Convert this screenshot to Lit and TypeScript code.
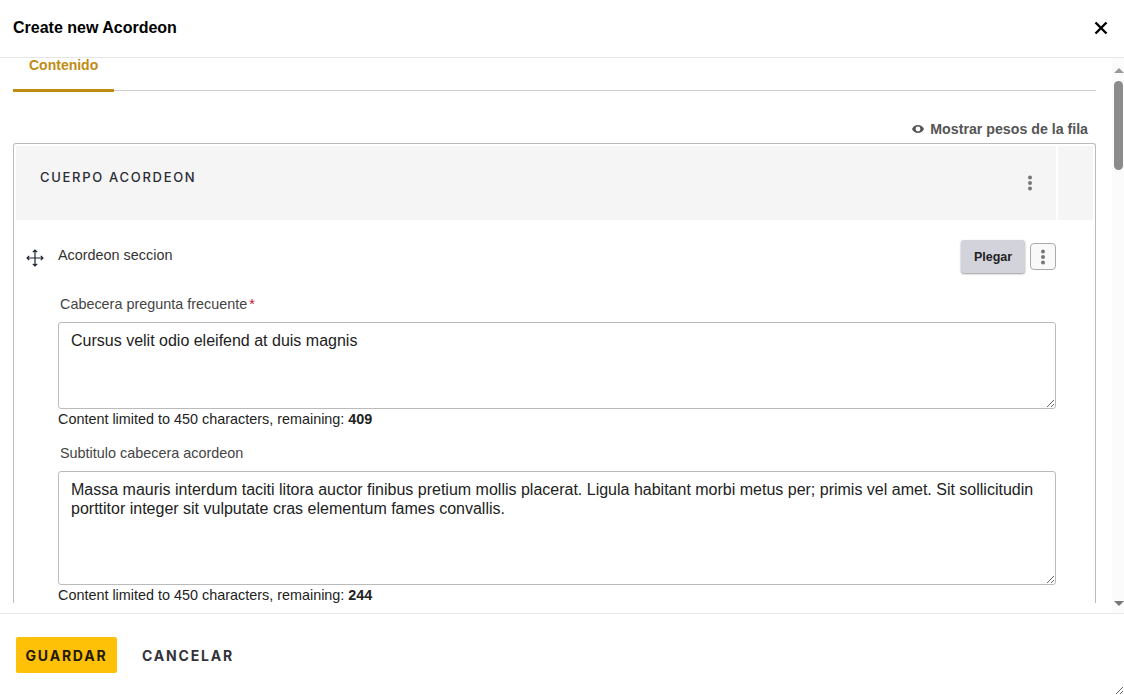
import { LitElement, html, css, svg } from "lit";
import { customElement } from "lit/decorators.js";

const dots = html`<svg class="dots" width="6" height="16" viewBox="0 0 6 16"><circle cx="3" cy="2.5" r="2"/><circle cx="3" cy="8" r="2"/><circle cx="3" cy="13.5" r="2"/></svg>`;

@customElement("app-root")
export class AppRoot extends LitElement {
  static styles = css`
    :host { display: block; font-family: "Liberation Sans", Arial, sans-serif; color: #222; }
    * { box-sizing: border-box; }
    .dialog { width: 1124px; height: 695px; display: flex; flex-direction: column; background: #fff; overflow: hidden; resize: both; }
    .head { height: 58px; flex: none; display: flex; align-items: center; justify-content: space-between; padding: 0 16px 2px 13px; border-bottom: 1px solid #e6e6e6; }
    .title { font-size: 16px; font-weight: 700; color: #000; }
    .close { display: block; }
    .middle { flex: 1; min-height: 0; display: flex; }
    .content { flex: 1; min-width: 0; overflow: hidden; padding: 0 16px 0 13px; }
    .tabs { height: 33px; border-bottom: 1px solid #ccc; display: flex; }
    .tab { width: 101px; height: 34px; flex: none; border-bottom: 3px solid #bf8c13; color: #bf8c13; font-size: 14px; font-weight: 700; padding: 0 0 0 16px; line-height: 15px; }
    .weights { display: flex; justify-content: flex-end; align-items: center; gap: 6px; height: 18px; margin-top: 29px; padding-right: 8px; color: #555; font-size: 14.2px; font-weight: 700; }
    .box { margin-top: 5px; border: 1px solid #bbb; border-bottom: none; border-radius: 3px 3px 0 0; padding: 2px 2px 0; }
    .band { display: flex; gap: 2px; height: 74px; }
    .band-main { flex: 1; background: #f5f5f5; display: flex; justify-content: space-between; padding: 22px 23px 0 24px; }
    .band-side { width: 35px; flex: none; background: #f5f5f5; }
    .band-title { font-family: Inter, sans-serif; font-size: 13px; letter-spacing: 1.7px; line-height: 19px; color: #2b2b33; font-weight: 500; }
    .band-dots { margin-top: 7px; }
    .dots { display: block; fill: #777; }
    .item { padding: 0 37px 0 9px; }
    .row { display: flex; height: 53px; padding-top: 20px; }
    .move { margin: 9px 14px 0 1px; flex: none; }
    .row-name { flex: 1; font-size: 14.4px; line-height: 30px; color: #333; }
    .plegar { width: 64px; height: 33px; border: none; border-radius: 3px; background: #d3d3db; box-shadow: 0 1px 2px #0006; font: 700 12.5px "Liberation Sans", Arial, sans-serif; color: #222; padding: 0; }
    .more { width: 26px; height: 27px; margin: 3px 0 0 5px; border: 1px solid #aaa; border-radius: 4px; background: #f9f9f9; display: flex; align-items: center; justify-content: center; padding: 0; }
    .field { margin-left: 33px; }
    .label { display: block; font-size: 14.4px; line-height: 17px; color: #444; padding-left: 2px; margin-bottom: 9px; }
    .req { color: #c8102e; margin-left: 2px; }
    .one { margin-top: 23px; }
    .two { margin-top: 18px; }
    textarea { display: block; width: 100%; border: 1px solid #bbb; border-radius: 3px; padding: 8px 12px; font: 16px/19px "Liberation Sans", Arial, sans-serif; color: #222; resize: vertical; outline: none; background: #fff; margin: 0; }
    .t1 { height: 87px; }
    .t2 { height: 114px; }
    .limit { font-size: 14.4px; line-height: 16px; margin-top: 2px; color: #222; }
    .limit b { font-weight: 700; }
    .bar { width: 12px; flex: none; background: #fbfbfb; display: flex; flex-direction: column; align-items: center; padding: 0 0 7px 1px; }
    .arrow { width: 0; height: 0; border-left: 5px solid transparent; border-right: 5px solid transparent; flex: none; }
    .up { border-bottom: 5px solid #999; margin-top: 10px; }
    .thumb { width: 9px; height: 89px; border-radius: 5px; background: #8b8b8b; margin-top: 8px; flex: none; }
    .gap { flex: 1; }
    .down { border-top: 5px solid #777; }
    .foot { height: 82px; flex: none; border-top: 1px solid #e6e6e6; display: flex; align-items: flex-start; padding: 23px 0 0 16px; gap: 25px; }
    .btn { height: 36px; border: none; border-radius: 2px; font: 700 14px Inter, sans-serif; letter-spacing: 1.8px; padding: 0; background: none; color: #33333b; }
    .save { width: 101px; background: #ffc107; color: #1f1a0a; }
  `;

  render() {
    return html`
      <div class="dialog">
        <header class="head">
          <div class="title">Create new Acordeon</div>
          <svg class="close" width="14" height="14" viewBox="0 0 14 14"><path d="M1.5 1.5l11 11M12.5 1.5l-11 11" stroke="#000" stroke-width="2.4" fill="none"/></svg>
        </header>
        <div class="middle">
          <main class="content">
            <div class="tabs"><div class="tab">Contenido</div></div>
            <div class="weights">
              <svg width="12" height="8" viewBox="0 0 12 8"><path fill-rule="evenodd" fill="#555" d="M6 0C3.4 0 1.2 1.6 0 4c1.2 2.4 3.4 4 6 4s4.8-1.6 6-4C10.800 1.600 8.600 0 6 0zm0 6.400A2.400 2.400 0 1 1 6 1.600a2.400 2.400 0 0 1 0 4.800z"/></svg>
              <span>Mostrar pesos de la fila</span>
            </div>
            <section class="box">
              <div class="band">
                <div class="band-main">
                  <div class="band-title">CUERPO ACORDEON</div>
                  <div class="band-dots">${dots}</div>
                </div>
                <div class="band-side"></div>
              </div>
              <div class="item">
                <div class="row">
                  <svg class="move" width="18" height="18" viewBox="0 0 18 18" fill="none" stroke="#1c2430" stroke-width="1.200">
                    ${svg`<path d="M9 1v16M1 9h16M6.800 3.200L9 1l2.200 2.200M6.800 14.800L9 17l2.200-2.200M3.200 6.800L1 9l2.200 2.200M14.800 6.800L17 9l-2.200 2.200"/>`}
                  </svg>
                  <div class="row-name">Acordeon seccion</div>
                  <button class="plegar">Plegar</button>
                  <button class="more">${dots}</button>
                </div>
                <div class="field one">
                  <label class="label">Cabecera pregunta frecuente<span class="req">*</span></label>
                  <textarea class="t1" .value=${"Cursus velit odio eleifend at duis magnis"}></textarea>
                  <div class="limit">Content limited to 450 characters, remaining: <b>409</b></div>
                </div>
                <div class="field two">
                  <label class="label">Subtitulo cabecera acordeon</label>
                  <textarea class="t2" .value=${"Massa mauris interdum taciti litora auctor finibus pretium mollis placerat. Ligula habitant morbi metus per; primis vel amet. Sit sollicitudin porttitor integer sit vulputate cras elementum fames convallis."}></textarea>
                  <div class="limit">Content limited to 450 characters, remaining: <b>244</b></div>
                </div>
              </div>
            </section>
          </main>
          <div class="bar">
            <div class="arrow up"></div>
            <div class="thumb"></div>
            <div class="gap"></div>
            <div class="arrow down"></div>
          </div>
        </div>
        <footer class="foot">
          <button class="btn save">GUARDAR</button>
          <button class="btn">CANCELAR</button>
        </footer>
      </div>
    `;
  }
}
